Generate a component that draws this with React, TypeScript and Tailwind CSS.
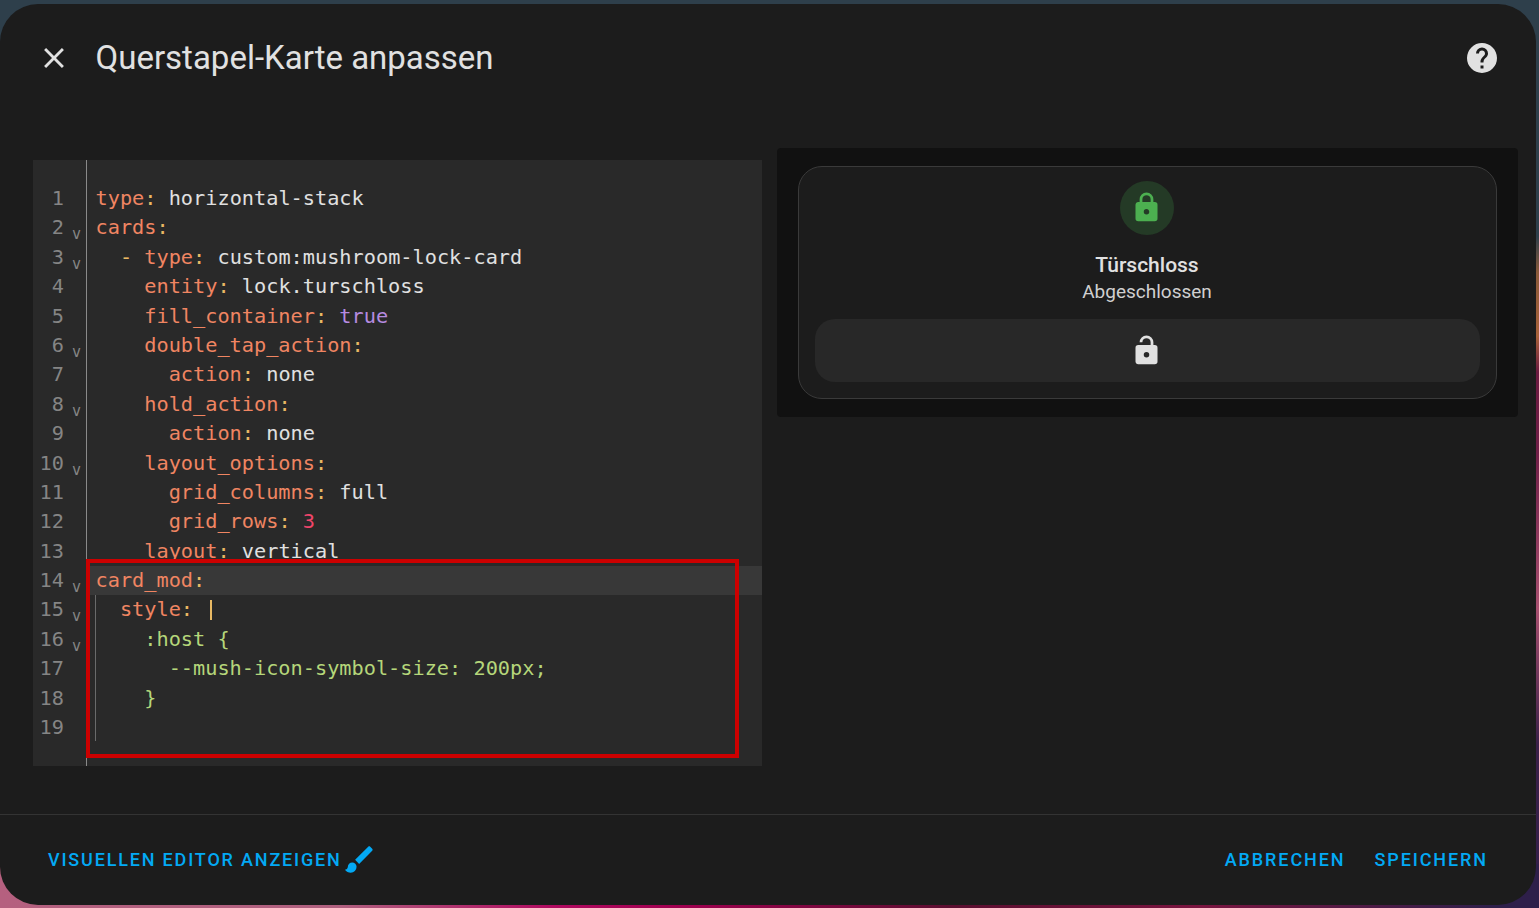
const mono = "font-['DejaVu_Sans_Mono',monospace]";

type Tok = [string, string];

const K = 'text-[#f08562]';
const P = 'text-[#e8b964]';
const V = 'text-[#e0e0e0]';
const B = 'text-[#b68be0]';
const N = 'text-[#f0456a]';
const S = 'text-[#b5d67a]';

const lines: { toks: Tok[]; fold?: boolean }[] = [
  { toks: [[K, 'type'], [P, ':'], [V, ' horizontal-stack']] },
  { toks: [[K, 'cards'], [P, ':']], fold: true },
  { toks: [[P, '  - '], [K, 'type'], [P, ':'], [V, ' custom:mushroom-lock-card']], fold: true },
  { toks: [[K, '    entity'], [P, ':'], [V, ' lock.turschloss']] },
  { toks: [[K, '    fill_container'], [P, ':'], [B, ' true']] },
  { toks: [[K, '    double_tap_action'], [P, ':']], fold: true },
  { toks: [[K, '      action'], [P, ':'], [V, ' none']] },
  { toks: [[K, '    hold_action'], [P, ':']], fold: true },
  { toks: [[K, '      action'], [P, ':'], [V, ' none']] },
  { toks: [[K, '    layout_options'], [P, ':']], fold: true },
  { toks: [[K, '      grid_columns'], [P, ':'], [V, ' full']] },
  { toks: [[K, '      grid_rows'], [P, ':'], [N, ' 3']] },
  { toks: [[K, '    layout'], [P, ':'], [V, ' vertical']] },
  { toks: [[K, 'card_mod'], [P, ':']], fold: true },
  { toks: [[K, '  style'], [P, ':'], [V, ' ']], fold: true },
  { toks: [[S, '    :host {']], fold: true },
  { toks: [[S, '      --mush-icon-symbol-size: 200px;']] },
  { toks: [[S, '    }']] },
  { toks: [[S, ' ']] },
];

function Mdi({ d, size, className }: { d: string; size: number; className?: string }) {
  return (
    <svg viewBox="0 0 24 24" width={size} height={size} className={className} fill="currentColor">
      <path d={d} />
    </svg>
  );
}

const closePath = 'M19,6.41L17.59,5L12,10.59L6.41,5L5,6.41L10.59,12L5,17.59L6.41,19L12,13.41L17.59,19L19,17.59L13.41,12L19,6.41Z';
const helpPath = 'M15.07,11.25L14.17,12.17C13.45,12.89 13,13.5 13,15H11V14.5C11,13.39 11.45,12.39 12.17,11.67L13.41,10.41C13.78,10.05 14,9.55 14,9C14,7.89 13.1,7 12,7A2,2 0 0,0 10,9H8A4,4 0 0,1 12,5A4,4 0 0,1 16,9C16,9.88 15.64,10.67 15.07,11.25M13,19H11V17H13M12,2A10,10 0 0,0 2,12A10,10 0 0,0 12,22A10,10 0 0,0 22,12C22,6.47 17.5,2 12,2Z';
const lockPath = 'M12,17A2,2 0 0,0 14,15C14,13.89 13.1,13 12,13A2,2 0 0,0 10,15A2,2 0 0,0 12,17M18,8A2,2 0 0,1 20,10V20A2,2 0 0,1 18,22H6A2,2 0 0,1 4,20V10C4,8.89 4.9,8 6,8H7V6A5,5 0 0,1 12,1A5,5 0 0,1 17,6V8H18M12,3A3,3 0 0,0 9,6V8H15V6A3,3 0 0,0 12,3Z';
const lockOpenPath = 'M18,8A2,2 0 0,1 20,10V20A2,2 0 0,1 18,22H6C4.89,22 4,21.1 4,20V10A2,2 0 0,1 6,8H15V6A3,3 0 0,0 12,3A3,3 0 0,0 9,6H7A5,5 0 0,1 12,1A5,5 0 0,1 17,6V8H18M12,17A2,2 0 0,0 14,15A2,2 0 0,0 12,13A2,2 0 0,0 10,15A2,2 0 0,0 12,17Z';
const brushPath = 'M20.71,4.63L19.37,3.29C19,2.9 18.35,2.9 17.96,3.29L9,12.25L11.75,15L20.71,6.04C21.1,5.65 21.1,5 20.71,4.63M7,14A3,3 0 0,0 4,17C4,18.31 2.84,19 2,19C2.92,20.22 4.5,21 6,21A4,4 0 0,0 10,17A3,3 0 0,0 7,14Z';

function Editor() {
  return (
    <div className={`relative w-[729px] h-[606px] bg-[#292929] overflow-hidden pt-[24px] text-[20.25px] ${mono}`}>
      {lines.map((line, i) => (
        <div key={i} className={`flex h-[29.4px] leading-[29.4px] whitespace-pre ${i === 13 ? 'bg-[#383838]' : ''}`}>
          <div className="relative w-[53px] shrink-0 bg-[#292929] pr-[22px] text-right text-[#858585]">
            {i + 1}
            {line.fold && (
              <span className="absolute left-[39px] top-[7px] text-[15px] text-[#858585]">v</span>
            )}
          </div>
          <div className="pl-[9.5px] flex">
            {line.toks.map(([c, t], j) => (
              <span key={j} className={c}>{t}</span>
            ))}
            {i === 14 && <span className="ml-[5px] mt-[5px] h-[20px] w-[2px] bg-[#e8b964]" />}
          </div>
        </div>
      ))}
      {/* gutter line + indent guide */}
      <div className="absolute left-[53px] top-0 bottom-0 w-px bg-[#8a8a8a]" />
      <div className="absolute left-[62px] top-[435px] h-[146px] w-px bg-[#6a6a6a]" />
      {/* red highlight drawn on top of the screenshot */}
      <div className="absolute left-[53px] top-[399px] w-[653px] h-[199px] border-4 border-[#cc0000]" />
    </div>
  );
}

function Preview() {
  return (
    <div className="w-[741px] h-[269px] rounded-[4px] bg-[#111111] pt-[18px] px-[21px]">
      <div className="h-[233px] rounded-[24px] border border-[#3a3a3a] bg-[#1c1c1c] px-[16px] pt-[14px] flex flex-col items-center font-['Roboto',sans-serif]">
        <div className="mr-[2px] w-[54px] h-[54px] rounded-full bg-[#243a26] flex items-center justify-center text-[#4caf50]">
          <Mdi d={lockPath} size={33} className="-mt-px" />
        </div>
        <div className="mr-[1px] mt-[16px] text-[21px] leading-[28px] font-medium text-[#e1e1e1]">Türschloss</div>
        <div className="mr-[1px] text-[19px] leading-[26px] text-[#d0d0d0]">Abgeschlossen</div>
        <div className="mt-[14px] w-full h-[63px] rounded-[20px] bg-[#282828] flex items-center justify-center text-[#e1e1e1]">
          <Mdi d={lockOpenPath} size={33} className="mr-[2px]" />
        </div>
      </div>
    </div>
  );
}

export default function App() {
  return (
    <div className="w-[1539px] h-[908px] overflow-hidden pt-[4px] bg-[linear-gradient(to_bottom,#2e3f4b_0%,#2e3f4b_26%,#8a5a3a_30%,#a8623a_37%,#6a1a40_41%,#701f48_50%,#a85070_67%,#3a2048_82%,#321f4a_100%)]">
      <div className="relative">
        <div className="absolute left-0 right-0 top-[860px] h-[44px] bg-[linear-gradient(to_right,#b5607f_0%,#b0607f_22%,#b00a60_36%,#a00050_44%,#5a0f30_62%,#7a1540_78%,#2e1f4a_97%)]" />
        <div className="absolute left-0 top-[-4px] h-[860px] w-[60px] bg-[#2e3f4b]" />
        <div className="relative w-[1536px] h-[901px] rounded-[38px] bg-[#1c1c1c] flex flex-col">
          <header className="h-[108px] flex items-start pl-[37px] pr-[36px] pt-[37px] font-['Roboto',sans-serif]">
            <Mdi d={closePath} size={34} className="text-[#e1e1e1]" />
            <h1 className="ml-[24.5px] text-[33px] leading-[34px] text-[#e1e1e1]">Querstapel-Karte anpassen</h1>
            <Mdi d={helpPath} size={36} className="ml-auto -mt-px text-[#e1e1e1]" />
          </header>
          <main className="flex-1 flex items-start pl-[33px] gap-[15px] pt-[36px]">
            <div className="mt-[12px]"><Editor /></div>
            <Preview />
          </main>
          <footer className="h-[91px] pb-[2px] border-t border-[#333333] flex items-center pl-[48px] pr-[48px] font-['Roboto',sans-serif] text-[18px] font-medium tracking-[1.9px] text-[#03a9f4]">
            <span className="tracking-[1.82px]">VISUELLEN EDITOR ANZEIGEN</span>
            <Mdi d={brushPath} size={35} />
            <span className="ml-auto">ABBRECHEN</span>
            <span className="ml-[29px]">SPEICHERN</span>
          </footer>
        </div>
      </div>
    </div>
  );
}
